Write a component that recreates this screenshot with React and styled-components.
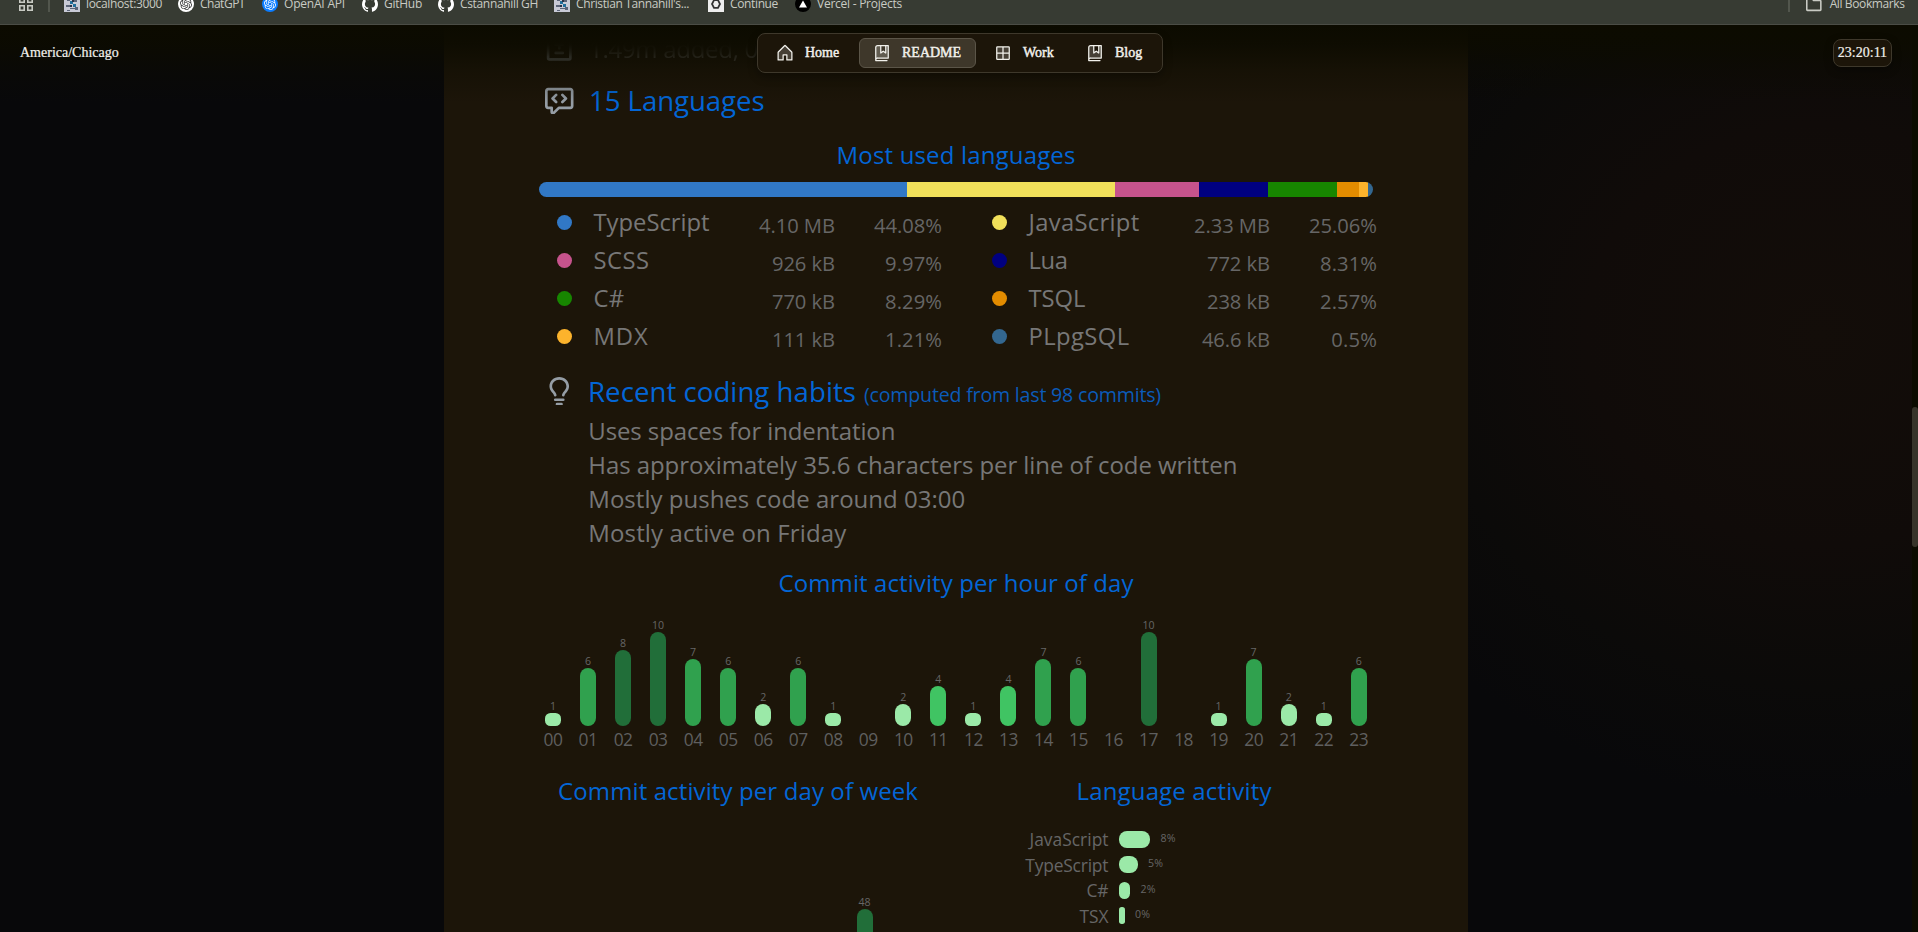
import React, { useLayoutEffect, useRef, useState } from "react";
import styled, { createGlobalStyle, css } from "styled-components";
import { PiHouseDuotone, PiBookBookmarkDuotone, PiGridFourDuotone } from "react-icons/pi";
import { SiOpenai, SiGithub } from "react-icons/si";

const GlobalStyle = createGlobalStyle`
  * { box-sizing: border-box; }
  body { margin: 0; background: #080808; overflow: hidden; }
`;

const sans = css`font-family: "Open Sans", "Noto Sans", sans-serif;`;

const Screen = styled.div`
  width: 1918px;
  height: 932px;
  overflow: hidden;
  display: flex;
  flex-direction: column;
  ${sans}
`;

/* ---------- browser bookmarks ---------- */
const BookmarkBar = styled.div`
  height: 25px;
  flex: none;
  overflow: hidden;
  background: #373b33;
  border-bottom: 1px solid #4b4d46;
`;
const BookmarkStrip = styled.div`
  height: 32px;
  margin-top: -12px;
  padding: 0 13px 0 19px;
  display: flex;
  align-items: center;
  font-size: 12px;
  color: #c9cbc4;
`;
const Bookmark = styled.div`
  width: ${(p) => p.$w}px;
  flex: none;
  display: flex;
  align-items: center;
  gap: ${(p) => p.$gap ?? 6}px;
  > :last-child { margin-top: -2px; }
`;
const Divider = styled.i`
  width: 2px;
  height: 16px;
  background: #52564d;
  margin: 0 ${(p) => p.$right}px 0 ${(p) => p.$left};
`;
const Favicon = styled.span`
  width: 16px;
  height: 16px;
  flex: none;
  display: flex;
  align-items: center;
  justify-content: center;
  border-radius: ${(p) => (p.$round ? "50%" : "0")};
  background: ${(p) => p.$bg || "transparent"};
  color: ${(p) => p.$fg || "#fff"};
`;

/* ---------- page ---------- */
const Page = styled.main`
  position: relative;
  height: 907px;
  display: flex;
  background:
    radial-gradient(ellipse 520px 470px at 1820px 310px, #130d09 0%, #100b09 45%, #0b0a09 75%, rgba(8, 8, 8, 0) 100%),
    #08080a;
`;
const Panel = styled.section`
  width: 1024px;
  height: 907px;
  margin-left: 444px;
  padding: 6px 95px 0;
  background: #1c1509;
  overflow: hidden;
`;
const Header = styled.header`
  position: absolute;
  inset: 0 0 auto 0;
  height: 78px;
  padding: 8px 26px 0 20px;
  display: grid;
  grid-template-columns: 737px 406px 1fr;
  align-items: start;
  background: linear-gradient(#0c0b00 0%, rgba(12, 11, 0, 0.85) 25%, rgba(12, 11, 0, 0.35) 60%, rgba(12, 11, 0, 0) 100%);
  font: 14px/20px "Liberation Serif", serif;
  color: #f2f1ec;
`;
const Zone = styled.span`
  padding-top: 10px;
  -webkit-text-stroke: 0.2px;
`;
const Clock = styled.span`
  justify-self: end;
  margin-top: 6px;
  width: 59px;
  height: 28px;
  border: 1px solid #3e382b;
  border-radius: 8px;
  background: #1c1509;
  box-shadow: 0 3px 8px rgba(0, 0, 0, 0.35);
  display: flex;
  align-items: center;
  justify-content: center;
  -webkit-text-stroke: 0.2px;
`;
const Nav = styled.nav`
  width: 406px;
  height: 40px;
  padding: 4px;
  display: flex;
  gap: 4px;
  border: 1px solid #3e382b;
  border-radius: 8px;
  background: #1c1509;
  box-shadow: 0 4px 10px rgba(0, 0, 0, 0.3);
`;
const NavItem = styled.a`
  width: ${(p) => p.$w}px;
  height: 30px;
  padding: 0 0 0 12px;
  display: flex;
  align-items: center;
  gap: 10px;
  border: 1px solid ${(p) => (p.$active ? "#5b5548" : "transparent")};
  border-radius: 6px;
  background: ${(p) => (p.$active ? "#3e372a" : "transparent")};
  -webkit-text-stroke: 0.45px;
  svg { width: 20px; height: 20px; flex: none; stroke-width: 0; }
`;
const ScrollTrack = styled.div`
  position: absolute;
  top: 0;
  right: 0;
  width: 6px;
  height: 907px;
  padding-top: 382px;
  background: #0b0b00;
`;
const ScrollThumb = styled.div`
  height: 140px;
  border-radius: 3px;
  background: #37342a;
`;

/* ---------- metrics card ---------- */
const Row = styled.div`
  height: ${(p) => p.$h}px;
  margin-top: ${(p) => p.$mt || 0}px;
  padding-left: 6px;
  display: flex;
  align-items: center;
  color: ${(p) => p.$color || "#777"};
  font-size: ${(p) => p.$size || 24}px;
`;
const FadedRow = styled(Row)`
  opacity: 0.5;
  mask-image: linear-gradient(transparent 35%, #000 75%);
`;
const RowIcon = styled.svg`
  width: 28.5px;
  height: 28.5px;
  margin-right: ${(p) => p.$gap ?? 15.5}px;
  flex: none;
  fill: #959da5;
`;
const Note = styled.span`
  font-size: 19.6px;
  margin: 6px 0 0 8px;
  color: #0b5bb8;
`;
const Title = styled.h3`
  margin: ${(p) => p.$mt}px 0 0;
  height: ${(p) => p.$h || 30}px;
  font-size: 24px;
  font-weight: 400;
  color: #0366d6;
  display: flex;
  align-items: center;
  justify-content: center;
`;
const LanguageBar = styled.div`
  height: 15px;
  margin-top: 12px;
  border-radius: 7.5px;
  overflow: hidden;
  display: flex;
`;
const Segment = styled.i`
  width: ${(p) => p.$w}px;
  background: ${(p) => p.$color};
`;
const LanguageGrid = styled.div`
  margin-top: 6px;
  display: grid;
  grid-template-columns: 435px 435px;
  grid-auto-rows: 38px;
`;
const Language = styled.div`
  width: 403px;
  padding-left: 18px;
  display: grid;
  grid-template-columns: 15px 150px 1fr 107px;
  align-items: center;
  font-size: 23.8px;
  color: #777;
`;
const Dot = styled.i`
  width: 15px;
  height: 15px;
  border-radius: 50%;
  background: ${(p) => p.$color};
`;
const LanguageName = styled.span`
  padding-left: 21.5px;
`;
const Amount = styled.span`
  padding-top: 5px;
  font-size: 20.2px;
  color: #666;
  text-align: right;
`;
const Habits = styled.ul`
  margin: 2.5px 0 0;
  padding: 0 0 0 49.3px;
  list-style: none;
`;
const Habit = styled.li`
  height: 34.3px;
  line-height: 34.3px;
  font-size: 24px;
  color: #777;
`;
const HourChart = styled.div`
  margin-left: -3.5px;
  display: grid;
  grid-template-columns: repeat(24, 35.04px);
`;
const Column = styled.div`
  height: ${(p) => p.$h}px;
  display: flex;
  flex-direction: column;
  align-items: center;
  justify-content: flex-end;
  font-size: 10.6px;
  line-height: 14px;
  color: #666;
`;
const shades = ["#9be9a8", "#40c463", "#30a14e", "#216e39"];
const Bar = styled.i`
  width: 16px;
  height: ${(p) => p.$h}px;
  flex: none;
  border-radius: ${(p) => (p.$h < 16 ? 5.5 : 8)}px;
  background: ${(p) => shades[p.$level]};
`;
const HourLabel = styled.span`
  height: 20px;
  margin-top: 3px;
  font-size: 17.4px;
  line-height: 20px;
  letter-spacing: -0.5px;
  text-align: center;
  color: #5f5f5f;
`;
const Halves = styled.div`
  margin-top: 27px;
  display: grid;
  grid-template-columns: 398px 398px;
  gap: 38px;
`;
const WeekChart = styled.div`
  margin-top: 88px;
  display: grid;
  grid-template-columns: repeat(7, 63.3px);
  justify-content: center;
`;
const DayColumn = styled(Column)`
  grid-column: 6;
`;
const ActivityList = styled.div`
  margin-top: 20.5px;
`;
const Activity = styled.div`
  height: 25.6px;
  display: flex;
  align-items: center;
`;
const ActivityName = styled.span`
  width: 133.5px;
  margin-right: 10.5px;
  font-size: 17.4px;
  text-align: right;
  color: #666;
`;
const ActivityBar = styled.i`
  width: ${(p) => p.$w}px;
  height: 17px;
  margin-right: 10.5px;
  border-radius: ${(p) => Math.min(8, p.$w / 2)}px;
  background: #9be9a8;
`;
const Percent = styled.span`
  padding-bottom: 3px;
  font-size: 10.6px;
  color: #666;
`;

const FitSpan = styled.span`
  display: inline-block;
  white-space: pre;
`;

/* Tracks its text so that it fills the given width. */
function Fit({ w, children }) {
  const ref = useRef(null);
  const [spacing, setSpacing] = useState(0);
  useLayoutEffect(() => {
    const natural = ref.current.getBoundingClientRect().width;
    setSpacing((w - natural) / children.length);
  }, []);
  return (
    <FitSpan ref={ref} style={{ letterSpacing: spacing, marginRight: -spacing }}>
      {children}
    </FitSpan>
  );
}

const REVIEW =
  "M1.75 1h12.5c.966 0 1.75.784 1.75 1.75v8.5A1.75 1.75 0 0 1 14.25 13H8.061l-2.574 2.573A1.458 1.458 0 0 1 3 14.543V13H1.75A1.75 1.75 0 0 1 0 11.25v-8.5C0 1.784.784 1 1.75 1ZM1.5 2.75v8.5c0 .138.112.25.25.25h2a.75.75 0 0 1 .75.75v2.19l2.72-2.72a.749.749 0 0 1 .53-.22h6.5a.25.25 0 0 0 .25-.25v-8.5a.25.25 0 0 0-.25-.25H1.75a.25.25 0 0 0-.25.25Zm5.28 1.72a.75.75 0 0 1 0 1.06L5.31 7l1.47 1.47a.751.751 0 0 1-.018 1.042.751.751 0 0 1-1.042.018l-2-2a.75.75 0 0 1 0-1.06l2-2a.75.75 0 0 1 1.06 0Zm2.44 0a.75.75 0 0 1 1.06 0l2 2a.75.75 0 0 1 0 1.06l-2 2a.751.751 0 0 1-1.042-.018.751.751 0 0 1-.018-1.042L10.69 7 9.22 5.53a.75.75 0 0 1 0-1.06Z";
const BULB =
  "M8 1.5c-2.363 0-4 1.69-4 3.75 0 .984.424 1.625.984 2.304l.214.253c.223.264.47.556.673.848.284.411.537.896.621 1.49a.75.75 0 0 1-1.484.211c-.04-.282-.163-.547-.37-.847a8.456 8.456 0 0 0-.542-.68c-.084-.1-.173-.205-.268-.32C3.201 7.75 2.5 6.766 2.5 5.25 2.5 2.31 4.863 0 8 0s5.5 2.31 5.5 5.25c0 1.516-.701 2.5-1.328 3.259-.095.115-.184.22-.268.319-.207.245-.383.453-.541.681-.208.3-.33.565-.37.847a.751.751 0 0 1-1.485-.212c.084-.593.337-1.078.621-1.489.203-.292.45-.584.673-.848.075-.088.147-.173.213-.253.561-.679.985-1.32.985-2.304 0-2.06-1.637-3.75-4-3.75ZM5.75 12h4.5a.75.75 0 0 1 0 1.5h-4.5a.75.75 0 0 1 0-1.5ZM6 15.25a.75.75 0 0 1 .75-.75h2.5a.75.75 0 0 1 0 1.5h-2.5a.75.75 0 0 1-.75-.75Z";

const languages = [
  ["TypeScript", "4.10 MB", "44.08%", "#3178c6", 115, 75, 67],
  ["JavaScript", "2.33 MB", "25.06%", "#f1e05a", 110, 75, 67],
  ["SCSS", "926 kB", "9.97%", "#c6538c", 55, 62, 56],
  ["Lua", "772 kB", "8.31%", "#000080", 38, 62, 56],
  ["C#", "770 kB", "8.29%", "#178600", 30, 62, 56],
  ["TSQL", "238 kB", "2.57%", "#e38c00", 56, 62, 56],
  ["MDX", "111 kB", "1.21%", "#fcb32c", 54, 62, 56],
  ["PLpgSQL", "46.6 kB", "0.5%", "#336790", 100, 67, 45],
];
const segments = [
  [368, "#3178c6"], [208, "#f1e05a"], [84, "#c6538c"], [69, "#000080"],
  [69, "#178600"], [21.5, "#e38c00"], [9.5, "#fcb32c"], [5, "#336790"],
];
const hours = [1, 6, 8, 10, 7, 6, 2, 6, 1, 0, 2, 4, 1, 4, 7, 6, 0, 10, 0, 1, 7, 2, 1, 6];
const level = (n) => (n >= 8 ? 3 : n >= 5 ? 2 : n >= 3 ? 1 : 0);
const habits = [
  ["Uses spaces for indentation", 307],
  ["Has approximately 35.6 characters per line of code written", 649],
  ["Mostly pushes code around 03:00", 377],
  ["Mostly active on Friday", 258],
];
const activity = [
  ["JavaScript", 31, "8%", 79], ["TypeScript", 18.5, "5%", 83],
  ["C#", 11, "2%", 22], ["TSX", 5.5, "0%", 29],
];

const AppsIcon = () => (
  <svg width="14" height="14" viewBox="0 0 14 14" fill="none" stroke="#c9cbc4" strokeWidth="1.6">
    <path d="M.8.8h4.4v4.4H.8zM8.8.8h4.4v4.4H8.8zM.8 8.8h4.4v4.4H.8zM8.8 8.8h4.4v4.4H8.8z" />
  </svg>
);
const PixelIcon = () => (
  <svg width="16" height="16" viewBox="0 0 16 16">
    <path fill="#c8cad6" d="M0 0h16v16H0z" />
    <path fill="#5b6478" d="M3 2h3v3H3zM10 3h3v3h-3zM2 9h4v2H2zM6 12h5v1H6zM3 14h3v1H3zM11 11h3v3h-3z" />
    <path fill="#1f6f9c" d="M6 5h3v3H6zM9 8h3v3H9z" />
    <path fill="#2b3145" d="M8 4h2v2H8zM6 9h2v2H6z" />
  </svg>
);
const TriangleIcon = () => (
  <svg width="8" height="8" viewBox="0 0 8 8"><path fill="#fff" d="M4 .4 8 7.6H0z" /></svg>
);
const RingIcon = () => (
  <svg width="10" height="10" viewBox="0 0 10 10" fill="none" stroke="#333" strokeWidth="1.8">
    <path d="M3 1.2h4L9 5 7 8.8H3L1 5z" />
  </svg>
);
const FolderIcon = () => (
  <svg width="16" height="16" viewBox="0 0 16 16" fill="none" stroke="#c9cbc4" strokeWidth="1.6">
    <path d="M.8 2.2v11.6q0 .7.7.7h13q.7 0 .7-.7V5.2q0-.7-.7-.7H7.8L6 2.2z" />
  </svg>
);

export default function App() {
  return (
    <Screen>
      <GlobalStyle />
      <BookmarkBar>
        <BookmarkStrip>
          <AppsIcon />
          <Divider $left="15px" $right={14} />
          <Bookmark $w={114} $gap={6}><Favicon><PixelIcon /></Favicon><Fit w={76}>localhost:3000</Fit></Bookmark>
          <Bookmark $w={84}><Favicon $round $bg="#fff" $fg="#333"><SiOpenai size={12} /></Favicon><Fit w={45}>ChatGPT</Fit></Bookmark>
          <Bookmark $w={100}><Favicon $round $bg="#0a7cff"><SiOpenai size={12} /></Favicon><Fit w={61}>OpenAI API</Fit></Bookmark>
          <Bookmark $w={76}><Favicon><SiGithub size={16} /></Favicon><Fit w={38}>GitHub</Fit></Bookmark>
          <Bookmark $w={116}><Favicon><SiGithub size={16} /></Favicon><Fit w={78}>Cstannahill GH</Fit></Bookmark>
          <Bookmark $w={154}><Favicon><PixelIcon /></Favicon><Fit w={113}>Christian Tannahill's...</Fit></Bookmark>
          <Bookmark $w={87}><Favicon $bg="#eee"><RingIcon /></Favicon><Fit w={48}>Continue</Fit></Bookmark>
          <Bookmark $w={120}><Favicon $round $bg="#000"><TriangleIcon /></Favicon><Fit w={85}>Vercel - Projects</Fit></Bookmark>
          <Divider $left="auto" $right={16} />
          <Bookmark $w={99} $gap={8}><FolderIcon /><Fit w={75}>All Bookmarks</Fit></Bookmark>
        </BookmarkStrip>
      </BookmarkBar>

      <Page>
        <Panel>
          <FadedRow $h={34}>
            <RowIcon viewBox="0 0 16 16">
              <path fill="none" stroke="#959da5" strokeWidth="1.5" strokeLinecap="round" d="M2.5 1.75h11q.75 0 .75.75v11q0 .75-.75.75h-11q-.75 0-.75-.75v-11q0-.75.75-.75zM8 4v4M6 6h4M6 10.6h4" />
            </RowIcon>
            <Fit w={169}>1.49m added, 0</Fit>
          </FadedRow>
          <Row $h={40} $mt={15} $size={27.6} $color="#0366d6">
            <RowIcon viewBox="0 0 16 16"><path d={REVIEW} /></RowIcon>
            <Fit w={175.5}>15 Languages</Fit>
          </Row>

          <Title $mt={19} $h={31}><Fit w={239}>Most used languages</Fit></Title>
          <LanguageBar>
            {segments.map(([w, c]) => <Segment key={c} $w={w} $color={c} />)}
          </LanguageBar>
          <LanguageGrid>
            {languages.map(([name, size, pct, color, nw, sw, pw]) => (
              <Language key={name}>
                <Dot $color={color} />
                <LanguageName><Fit w={nw + 1}>{name}</Fit></LanguageName>
                <Amount><Fit w={sw + 1}>{size}</Fit></Amount>
                <Amount><Fit w={pw + 1}>{pct}</Fit></Amount>
              </Language>
            ))}
          </LanguageGrid>

          <Row $h={40} $mt={16} $size={27.6} $color="#0366d6">
            <RowIcon viewBox="0 0 16 16" $gap={14.5}><path d={BULB} /></RowIcon>
            <Fit w={268}>Recent coding habits</Fit>
            <Note><Fit w={297}>(computed from last 98 commits)</Fit></Note>
          </Row>
          <Habits>
            {habits.map(([t, w]) => <Habit key={t}><Fit w={w}>{t}</Fit></Habit>)}
          </Habits>

          <Title $mt={16.5}><Fit w={355}>Commit activity per hour of day</Fit></Title>
          <HourChart>
            {hours.map((n, i) => (
              <Column key={i} $h={128.7}>
                {n > 0 && <span>{n}</span>}
                {n > 0 && <Bar $h={3.7 + 9.03 * n} $level={level(n)} />}
              </Column>
            ))}
            {hours.map((_, i) => <HourLabel key={i}>{String(i).padStart(2, "0")}</HourLabel>)}
          </HourChart>

          <Halves>
            <div>
              <Title $mt={0}><Fit w={360}>Commit activity per day of week</Fit></Title>
              <WeekChart>
                <DayColumn $h={109}>
                  <span>48</span>
                  <Bar $h={94} $level={3} />
                </DayColumn>
              </WeekChart>
            </div>
            <div>
              <Title $mt={0}><Fit w={195}>Language activity</Fit></Title>
              <ActivityList>
                {activity.map(([name, w, pct, nw]) => (
                  <Activity key={name}>
                    <ActivityName><Fit w={nw}>{name}</Fit></ActivityName>
                    <ActivityBar $w={w} />
                    <Percent><Fit w={15}>{pct}</Fit></Percent>
                  </Activity>
                ))}
              </ActivityList>
            </div>
          </Halves>
        </Panel>

        <Header>
          <Zone>America/Chicago</Zone>
          <Nav>
            <NavItem $w={93}><PiHouseDuotone /><span>Home</span></NavItem>
            <NavItem $w={117} $active><PiBookBookmarkDuotone /><span>README</span></NavItem>
            <NavItem $w={88}><PiGridFourDuotone /><span>Work</span></NavItem>
            <NavItem $w={86}><PiBookBookmarkDuotone /><span>Blog</span></NavItem>
          </Nav>
          <Clock>23:20:11</Clock>
        </Header>
        <ScrollTrack><ScrollThumb /></ScrollTrack>
      </Page>
    </Screen>
  );
}
